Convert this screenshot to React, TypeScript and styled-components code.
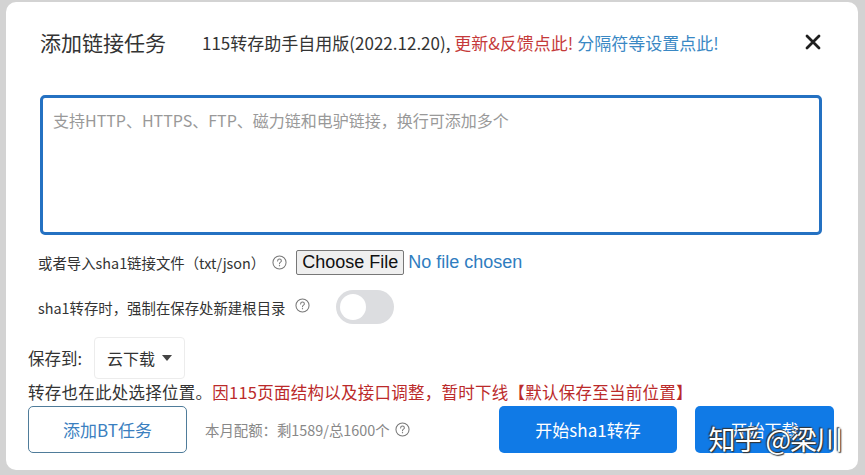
import React from "react";
import styled, { createGlobalStyle } from "styled-components";

const GlobalStyle = createGlobalStyle`
  html, body {
    margin: 0;
    padding: 0;
  }
  body {
    background: #d3d3d3;
    font-family: "Noto Sans CJK SC", "Noto Sans", sans-serif;
    color: #333;
  }
`;

const Page = styled.div`
  width: 865px;
  height: 475px;
  box-sizing: border-box;
  padding: 2px 7px 5px 6px;
  overflow: hidden;
`;

const Dialog = styled.section`
  position: relative;
  height: 100%;
  box-sizing: border-box;
  background: #fff;
  border-radius: 10px;
  padding: 20px 24px 0 22px;
`;

const Header = styled.header`
  display: flex;
  align-items: center;
  height: 40px;
  margin: 0 12px;
`;

const Title = styled.h2`
  margin: 0 36px 0 0;
  font-size: 21px;
  font-weight: 400;
  color: #333;
`;

const Notice = styled.div`
  font-size: 17px;
  color: #333;
  white-space: nowrap;
`;

const Link = styled.span<{ $tone: "red" | "blue" }>`
  color: ${(p) => (p.$tone === "red" ? "#c53a3a" : "#3a88c4")};
`;

const Close = styled.button`
  margin-left: auto;
  width: 18px;
  height: 18px;
  padding: 0;
  border: none;
  background: none;
  display: flex;
  align-items: center;
  justify-content: center;
`;

const Input = styled.textarea`
  display: block;
  box-sizing: border-box;
  width: 782px;
  height: 140px;
  margin: 33px 12px 0;
  padding: 10px 10px;
  border: 3px solid #2471c2;
  border-radius: 5px;
  outline: none;
  resize: none;
  font-family: "Noto Sans CJK SC", "Noto Sans", sans-serif;
  font-size: 16px;
  line-height: 24px;
  &::placeholder {
    color: #999;
  }
`;

const Row = styled.div<{ $top: number; $indent: number; $h: number }>`
  display: flex;
  align-items: center;
  height: ${(p) => p.$h}px;
  margin-top: ${(p) => p.$top}px;
  margin-left: ${(p) => p.$indent}px;
`;

const Label = styled.span<{ $size?: number }>`
  font-size: ${(p) => p.$size ?? 14.4}px;
  color: #333;
  white-space: nowrap;
`;

const Help = styled.span<{ $gap: number; $lift?: number }>`
  display: inline-flex;
  margin-left: ${(p) => p.$gap}px;
  margin-top: ${(p) => -(p.$lift ?? 0)}px;
`;

const FileButton = styled.button`
  margin-left: 9px;
  height: 25px;
  width: 108px;
  padding: 0;
  border: 1px solid #777;
  border-radius: 2px;
  background: #efefef;
  font-family: "Liberation Sans", Arial, sans-serif;
  font-size: 18px;
  color: #111;
`;

const FileName = styled.span`
  margin-left: 4px;
  font-family: "Liberation Sans", Arial, sans-serif;
  font-size: 18px;
  color: #2f7dc0;
`;

const Switch = styled.span`
  margin-left: 26px;
  width: 58px;
  height: 34px;
  border-radius: 17px;
  background: #dcdde0;
  display: flex;
  align-items: center;
  padding-left: 4px;
  box-sizing: border-box;
  &::before {
    content: "";
    width: 26px;
    height: 26px;
    border-radius: 50%;
    background: #fff;
  }
`;

const Select = styled.button`
  margin-left: 12px;
  width: 91px;
  height: 42px;
  box-sizing: border-box;
  border: 1px solid #ececec;
  border-radius: 4px;
  background: #fff;
  display: flex;
  align-items: center;
  gap: 7px;
  padding: 0 0 0 12px;
  font-family: "Noto Sans CJK SC", sans-serif;
  font-size: 16px;
  color: #333;
`;

const Caret = styled.span`
  width: 0;
  height: 0;
  border-left: 5px solid transparent;
  border-right: 5px solid transparent;
  border-top: 6px solid #444;
`;

const Warning = styled.div`
  margin-top: 3px;
  font-size: 16.5px;
  letter-spacing: 0.25px;
  line-height: 20px;
  color: #333;
  white-space: nowrap;
`;

const Red = styled.span`
  color: #bb2a2a;
`;

const Actions = styled.div`
  display: flex;
  align-items: center;
  height: 47px;
  margin-top: 4px;
`;

const OutlineButton = styled.button`
  width: 159px;
  height: 47px;
  border: 1px solid #4f7c9a;
  border-radius: 5px;
  background: #fff;
  font-family: "Noto Sans CJK SC", sans-serif;
  font-size: 17px;
  color: #3b7fc0;
`;

const Quota = styled.span`
  margin-left: 18px;
  font-size: 14.4px;
  color: #888;
  display: flex;
  align-items: center;
`;

const PrimaryButton = styled.button<{ $w: number; $push?: boolean }>`
  width: ${(p) => p.$w}px;
  height: 47px;
  margin-left: ${(p) => (p.$push ? "auto" : "18px")};
  border: none;
  border-radius: 5px;
  background: #107ae6;
  font-family: "Noto Sans CJK SC", sans-serif;
  font-size: 17px;
  color: #fff;
`;

const Watermark = styled.div`
  position: absolute;
  right: 16px;
  bottom: 12px;
  font-size: 27px;
  color: #fff;
  letter-spacing: -1px;
  text-shadow: 0 0 2px #333, 1px 1px 1px #333, -1px -1px 1px #333;
  pointer-events: none;
`;

const QuestionIcon = ({ size = 15 }: { size?: number }) => (
  <svg width={size} height={size} viewBox="0 0 16 16" fill="none">
    <circle cx="8" cy="8" r="7" stroke="#777" strokeWidth="1.1" />
    <path
      d="M6 6.3a2 2 0 0 1 4 0c0 1.3-2 1.5-2 2.9"
      stroke="#777"
      strokeWidth="1.1"
      strokeLinecap="round"
    />
    <circle cx="8" cy="11.4" r="0.7" fill="#777" />
  </svg>
);

export default function App() {
  return (
    <Page>
      <GlobalStyle />
      <Dialog>
        <Header>
          <Title>添加链接任务</Title>
          <Notice>
            115转存助手自用版(2022.12.20), <Link $tone="red">更新&amp;反馈点此!</Link>{" "}
            <Link $tone="blue">分隔符等设置点此!</Link>
          </Notice>
          <Close aria-label="关闭">
            <svg width="16" height="16" viewBox="0 0 16 16">
              <path d="M2 2L14 14M14 2L2 14" stroke="#1f1f1f" strokeWidth="2.8" strokeLinecap="round" />
            </svg>
          </Close>
        </Header>

        <Input placeholder="支持HTTP、HTTPS、FTP、磁力链和电驴链接，换行可添加多个" />

        <Row $top={14} $indent={10} $h={26}>
          <Label>或者导入sha1链接文件（txt/json）</Label>
          <Help $gap={7}>
            <QuestionIcon />
          </Help>
          <FileButton>Choose File</FileButton>
          <FileName>No file chosen</FileName>
        </Row>

        <Row $top={15} $indent={10} $h={34}>
          <Label>sha1转存时，强制在保存处新建根目录</Label>
          <Help $gap={10} $lift={4}>
            <QuestionIcon />
          </Help>
          <Switch />
        </Row>

        <Row $top={13} $indent={0} $h={42}>
          <Label $size={16.5}>保存到:</Label>
          <Select>
            云下载 <Caret />
          </Select>
        </Row>

        <Warning>
          转存也在此处选择位置。<Red>因115页面结构以及接口调整，暂时下线【默认保存至当前位置】</Red>
        </Warning>

        <Actions>
          <OutlineButton>添加BT任务</OutlineButton>
          <Quota>
            本月配额：剩1589/总1600个
            <Help $gap={5}>
              <QuestionIcon />
            </Help>
          </Quota>
          <PrimaryButton $w={178} $push>
            开始sha1转存
          </PrimaryButton>
          <PrimaryButton $w={139}>开始下载</PrimaryButton>
        </Actions>

        <Watermark>知乎 @梁川</Watermark>
      </Dialog>
    </Page>
  );
}
